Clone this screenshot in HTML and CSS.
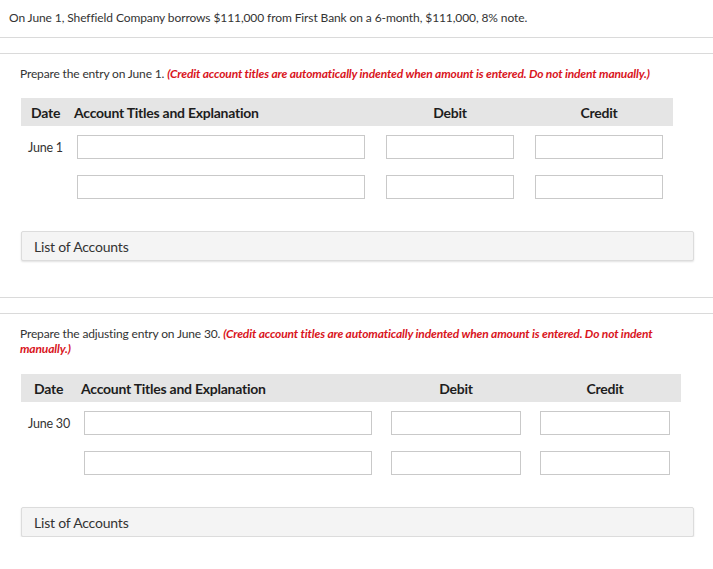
FILE: index.html
```html
<!DOCTYPE html>
<html lang="en">
<head>
<meta charset="utf-8">
<title>Journal entry</title>
<link rel="stylesheet" href="styles.css">
</head>
<body>
<div class="question">On June 1, Sheffield Company borrows $111,000 from First Bank on a 6-month, $111,000, 8% note.</div>

<section class="part part-first">
  <p class="instr">Prepare the entry on June 1. <em class="warn">(Credit account titles are automatically indented when amount is entered. Do not indent manually.)</em></p>
  <div class="journal j1">
    <div class="jhead">
      <div class="h-date">Date</div>
      <div class="h-acct">Account Titles and Explanation</div>
      <div class="h-amt">Debit</div>
      <div class="h-amt">Credit</div>
    </div>
    <div class="jrow">
      <div class="r-date">June 1</div>
      <div class="field"></div>
      <div class="field"></div>
      <div class="field"></div>
    </div>
    <div class="jrow">
      <div class="r-date"></div>
      <div class="field"></div>
      <div class="field"></div>
      <div class="field"></div>
    </div>
  </div>
  <div class="accounts">List of Accounts</div>
</section>

<section class="part part-second">
  <p class="instr">Prepare the adjusting entry on June 30. <em class="warn">(Credit account titles are automatically indented when amount is entered. Do not indent manually.)</em></p>
  <div class="journal j2">
    <div class="jhead">
      <div class="h-date">Date</div>
      <div class="h-acct">Account Titles and Explanation</div>
      <div class="h-amt">Debit</div>
      <div class="h-amt">Credit</div>
    </div>
    <div class="jrow">
      <div class="r-date">June 30</div>
      <div class="field"></div>
      <div class="field"></div>
      <div class="field"></div>
    </div>
    <div class="jrow">
      <div class="r-date"></div>
      <div class="field"></div>
      <div class="field"></div>
      <div class="field"></div>
    </div>
  </div>
  <div class="accounts">List of Accounts</div>
</section>
</body>
</html>
```

FILE: styles.css
```css
* { box-sizing: border-box; }
html, body { margin: 0; padding: 0; background: #fff; }
body {
  font-family: Lato, "Open Sans", Arial, sans-serif;
  color: #333;
  font-size: 12px;
}
.question {
  height: 38px;
  padding: 10px 9px 0;
  line-height: 15px;
  font-size: 12px;
  letter-spacing: -0.1px;
  border-bottom: 1px solid #dadada;
}
.part {
  border-top: 1px solid #dadada;
  padding: 0 20px 0 21px;
}
.part-first {
  margin-top: 15px;
  height: 245px;
  border-bottom: 1px solid #dadada;
  padding-top: 12px;
}
.part-second {
  margin-top: 15px;
  padding-top: 12px;
}
.instr {
  margin: 0 0 0 -1px;
  font-size: 12px;
  line-height: 15px;
  letter-spacing: -0.15px;
  color: #333;
}
.warn {
  color: #d9141c;
  font-weight: 700;
  font-style: italic;
}
.part-first .instr { margin-bottom: 17px; }
.part-second .instr { margin-bottom: 18px; }

.journal { display: flex; flex-direction: column; }
.jhead, .jrow { display: grid; align-items: center; }
.j1 .jhead, .j1 .jrow {
  grid-template-columns: 35px 288px 128px 128px;
  column-gap: 21px;
  width: 652px;
}
.j2 .jhead, .j2 .jrow {
  grid-template-columns: 44px 288px 130px 130px;
  column-gap: 19px;
  width: 660px;
}
.jhead {
  height: 28px;
  background: #e5e5e5;
  font-weight: 700;
  font-size: 14px;
  color: #1d1d1d;
  letter-spacing: -0.25px;
}
.j1 .h-date { padding-left: 10px; }
.j2 .h-date { padding-left: 13px; }
.h-acct { margin-left: -3px; white-space: nowrap; }
.h-amt { text-align: center; }
.jrow { margin-top: 9px; }
.jrow + .jrow { margin-top: 16px; }
.r-date {
  padding-left: 7px;
  font-size: 12.5px;
  color: #333;
  letter-spacing: -0.2px;
  white-space: nowrap;
}
.field {
  height: 24px;
  border: 1px solid #c9c9c9;
  background: #fff;
}
.accounts {
  margin-top: 32px;
  height: 30px;
  width: 673px;
  padding-left: 12px;
  display: flex;
  align-items: center;
  font-size: 14px;
  color: #333;
  letter-spacing: -0.2px;
  background: #f4f4f4;
  border: 1px solid #dcdcdc;
  border-radius: 2px;
  box-shadow: 0 1px 2px rgba(0,0,0,0.12);
}
```
